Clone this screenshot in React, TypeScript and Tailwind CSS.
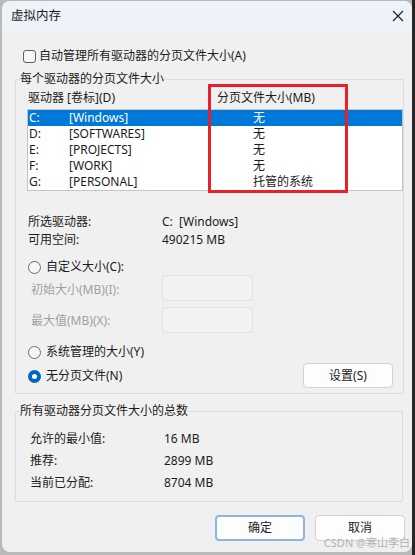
import React from 'react';

const drives = [
  { letter: 'C:', label: '[Windows]', size: '无' },
  { letter: 'D:', label: '[SOFTWARES]', size: '无' },
  { letter: 'E:', label: '[PROJECTS]', size: '无' },
  { letter: 'F:', label: '[WORK]', size: '无' },
  { letter: 'G:', label: '[PERSONAL]', size: '托管的系统' },
];

const totals = [
  { label: '允许的最小值:', value: '16 MB' },
  { label: '推荐:', value: '2899 MB' },
  { label: '当前已分配:', value: '8704 MB' },
];

function Radio({ checked }: { checked?: boolean }) {
  if (checked) {
    return (
      <span className="w-[13px] h-[13px] rounded-full bg-[#0067c0] flex items-center justify-center shrink-0">
        <span className="w-[5px] h-[5px] rounded-full bg-white" />
      </span>
    );
  }
  return <span className="w-[13px] h-[13px] rounded-full border border-[#6b6b6b] bg-[#f7f7f7] shrink-0" />;
}

export default function App() {
  return (
    <div className="relative w-[415px] h-[555px] bg-[#b9b9b9] flex font-['Noto_Sans','Noto_Sans_CJK_SC',sans-serif] text-[12px] text-[#1b1b1b] overflow-hidden">
      {/* dialog window */}
      <div className="ml-[2px] mt-[1px] w-[410px] h-[551px] rounded-[8px] overflow-hidden bg-[#f0f0f0] flex flex-col">
        {/* title bar */}
        <div className="h-[30px] bg-[#eef3f9] flex items-center justify-between pl-[9px] pr-[8px]">
          <span className="leading-[16px] text-[12.5px]">虚拟内存</span>
          <svg width="12" height="12" viewBox="0 0 12 12" className="text-[#1b1b1b]">
            <path d="M1 1 L11 11 M11 1 L1 11" stroke="currentColor" strokeWidth="1.1" />
          </svg>
        </div>

        {/* auto manage checkbox */}
        <div className="mt-[18px] h-[14px] pl-[21px] flex items-center gap-[3px]">
          <span className="w-[13px] h-[13px] rounded-[3px] border border-[#5f5f5f] bg-[#f7f7f7] shrink-0" />
          <span className="leading-[16px]">自动管理所有驱动器的分页文件大小(A)</span>
        </div>

        {/* per drive group */}
        <fieldset className="mt-[8px] ml-[13px] w-[388px] border border-[#dcdcdc] rounded-[2px] pb-[5px]">
          <legend className="ml-[4px] leading-[16px]">每个驱动器的分页文件大小</legend>
          <div className="pl-[11px]">
            <div className="mt-[3px] h-[16px] flex leading-[16px] pl-[1px]">
              <span className="w-[189px]">驱动器 [卷标](D)</span>
              <span>分页文件大小(MB)</span>
            </div>
            <div className="mt-[3px] w-[376px] border border-[#c4c4c4] bg-white">
              {drives.map((d, i) => (
                <div
                  key={d.letter}
                  className={`h-[16px] flex leading-[16px] pl-[1px] ${i === 0 ? 'bg-[#0078d7] text-white' : ''}`}
                >
                  <span className="w-[40px]">{d.letter}</span>
                  <span className="w-[184px]">{d.label}</span>
                  <span>{d.size}</span>
                </div>
              ))}
            </div>

            <div className="mt-[22px] pl-[1px]">
              <div className="h-[18px] flex items-center leading-[16px]">
                <span className="w-[134px]">所选驱动器:</span>
                <span>C:&nbsp; [Windows]</span>
              </div>
              <div className="h-[18px] flex items-center leading-[16px]">
                <span className="w-[134px]">可用空间:</span>
                <span>490215 MB</span>
              </div>
            </div>

            <div className="mt-[10px] h-[16px] pl-[1px] flex items-center gap-[5px] leading-[16px]">
              <Radio />
              <span>自定义大小(C):</span>
            </div>
            <div className="h-[26px] flex items-center text-[#a0a0a0] leading-[16px]">
              <span className="w-[135px] pl-[4px] pt-[3px]">初始大小(MB)(I):</span>
              <span className="w-[91px] h-[26px] border border-[#e2e2e2] bg-[#f2f2f2] rounded-[2px]" />
            </div>
            <div className="mt-[6px] h-[26px] flex items-center text-[#a0a0a0] leading-[16px]">
              <span className="w-[135px] pl-[4px] pt-[2px]">最大值(MB)(X):</span>
              <span className="w-[91px] h-[26px] border border-[#e2e2e2] bg-[#f2f2f2] rounded-[2px]" />
            </div>

            <div className="mt-[11px] h-[16px] pl-[1px] flex items-center gap-[5px] leading-[16px]">
              <Radio />
              <span>系统管理的大小(Y)</span>
            </div>
            <div className="mt-[3px] h-[25px] pl-[1px] pr-[10px] flex items-center justify-between leading-[16px]">
              <div className="flex items-center gap-[5px] pt-[1px]">
                <Radio checked />
                <span>无分页文件(N)</span>
              </div>
              <button className="w-[90px] h-[25px] bg-[#fdfdfd] border border-[#d3d3d3] rounded-[4px] text-[12px]">
                设置(S)
              </button>
            </div>
          </div>
        </fieldset>

        {/* totals group */}
        <fieldset className="mt-[9px] ml-[13px] w-[388px] border border-[#dcdcdc] rounded-[2px] pb-[7px]">
          <legend className="ml-[4px] leading-[16px]">所有驱动器分页文件大小的总数</legend>
          <div className="mt-[9px] pl-[14px]">
            {totals.map((t) => (
              <div key={t.label} className="h-[22px] flex items-center leading-[16px]">
                <span className="w-[134px]">{t.label}</span>
                <span>{t.value}</span>
              </div>
            ))}
          </div>
        </fieldset>

        {/* dialog buttons */}
        <div className="mt-[13px] pr-[7px] flex justify-end gap-[10px]">
          <button className="w-[90px] h-[26px] bg-[#fdfdfd] border-2 border-[#8db5de] rounded-[4px] text-[12px]">
            确定
          </button>
          <button className="w-[90px] h-[26px] bg-[#fdfdfd] border border-[#d3d3d3] rounded-[4px] text-[12px]">
            取消
          </button>
        </div>
      </div>
      <div className="w-[3px] h-full bg-[#262626]" />

      {/* red annotation box */}
      <div className="absolute left-[208px] top-[84px] w-[140px] h-[109px] border-[3px] border-[#e8202a]" />

      {/* watermark */}
      <span className="absolute right-[5px] top-[536px] text-[11px] leading-[14px] text-[#b4b4b4]">CSDN @寒山李白</span>
    </div>
  );
}
